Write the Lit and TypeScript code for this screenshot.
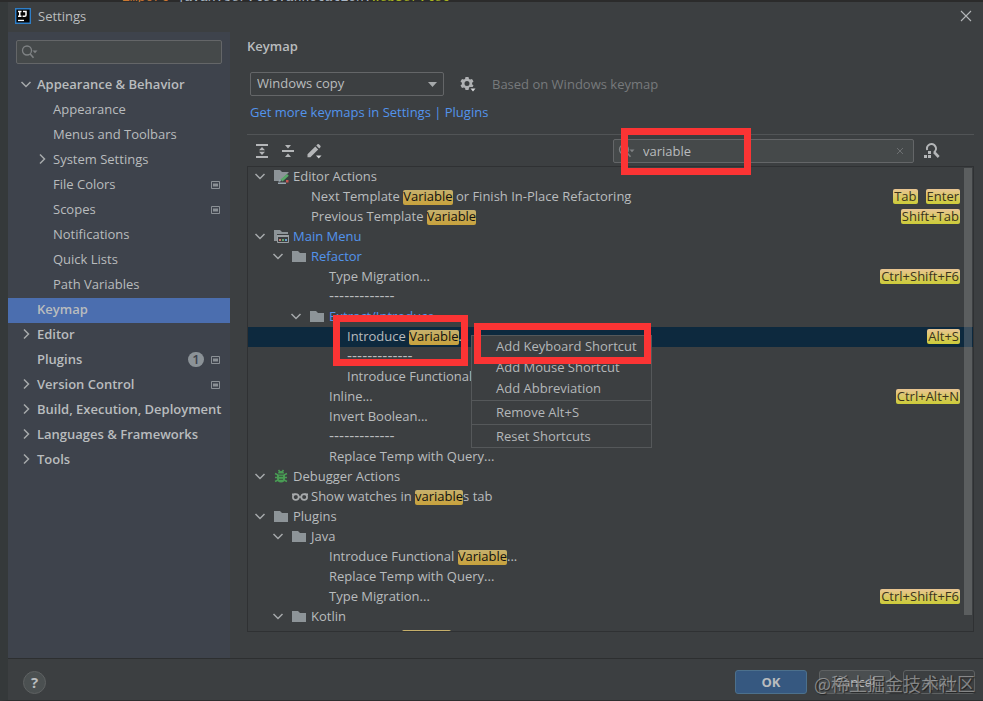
import { LitElement, html, css, svg, nothing, TemplateResult } from "lit";
import { customElement, property, state } from "lit/decorators.js";
import { classMap } from "lit/directives/class-map.js";
import { styleMap } from "lit/directives/style-map.js";

/* ---------- icons ---------- */

const icon = (body: unknown, size = 16) =>
  html`<svg width=${size} height=${size} viewBox="0 0 ${size} ${size}" aria-hidden="true">${body}</svg>`;

const chevronDown = () =>
  icon(svg`<path d="M1.500 4 L6 8.500 L10.500 4" fill="none" stroke="#a6a9ab" stroke-width="1.500"/>`, 12);
const chevronRight = () =>
  icon(svg`<path d="M4 1.500 L8.500 6 L4 10.500" fill="none" stroke="#a6a9ab" stroke-width="1.500"/>`, 12);

const folderShape = svg`<path d="M0 3h6l2 2h6v9H0z" fill="#8d9498"/>`;

const icons: Record<string, () => TemplateResult> = {
  folder: () => icon(folderShape),
  editor: () =>
    icon(svg`<path d="M0 2h6l2 2h7L6.500 13H0z" fill="#8d9498"/>
      <path d="M4.500 14l1-2.700 1.800 1.800z" fill="#9aa7b0"/>
      <path d="M6.500 11.500l6.500-5.500 1.800 1.800L8.500 13.500z" fill="#59a869"/>
      <path d="M4 14.500h8V16H4z" fill="#9aa7b0"/><path d="M12 12h2.500v2.500H12z" fill="#c75450"/>`),
  menu: () =>
    icon(svg`<path d="M0 2h6l2 2h6v2H3v7H0z" fill="#8d9498"/>
      <path d="M3.500 7.500h11v7h-11z" fill="#3c3f41" stroke="#9aa0a4"/>
      <path d="M3 7h12v2H3z" fill="#9aa0a4"/>
      <path d="M5 11h2v2H5z" fill="#c77a70"/><path d="M8 11h2v2H8z" fill="#62a870"/>
      <path d="M11 11h2v2h-2z" fill="#6a9fd0"/>`),
  bug: () =>
    icon(svg`<g fill="none" stroke="#499c54" stroke-width="1.600">
      <path d="M1 5.500l3 1.500M1 9.500h12M1 13.500l3-1.500M13 5.500l-3 1.500M13 13.500l-3-1.500M4.500 2l1.500 2M9.500 2L8 4"/></g>
      <path d="M4 5.500a3 2.500 0 0 1 6 0z" fill="#499c54"/>
      <path d="M3 6.500h8v4a4 4 0 0 1-8 0z" fill="#499c54"/>
      <path d="M5 8.300h4M5 11.300h4" stroke="#35583a" stroke-width="1"/>`),
  glasses: () =>
    icon(svg`<g fill="none" stroke="#a6a9ab" stroke-width="1.700">
      <circle cx="3.800" cy="9" r="2.900"/><circle cx="12.200" cy="9" r="2.900"/>
      <path d="M6.700 9h2.600M0 6.300h3.500M12.500 6.300H16"/></g>`),
};

const searchIcon = () =>
  icon(svg`<circle cx="6" cy="7.500" r="4.500" fill="none" stroke="#7f8284" stroke-width="1.300"/>
    <path d="M9 10.700l3.500 4" stroke="#7f8284" stroke-width="1.600"/>
    <path d="M11.500 7.500h5l-2.500 2.800z" fill="#7f8284"/>`, 18);

const projectIcon = () =>
  icon(svg`<path d="M.5 1.500h8v7h-8z" fill="none" stroke="#8b9095"/><path d="M2 3.500h5v3H2z" fill="#8b9095"/>`, 9);

const logo = () =>
  icon(svg`<path d="M.7.700h14.600v14.600H.7z" fill="#050505" stroke="#2f7fc8" stroke-width="1.400"/>
    <path d="M3 3.500h3.500M4.750 3.500v4.500M3 8.200h3.500M8 3.500h3V7q0 1.300-1.300 1.300H7.600" fill="none" stroke="#fff" stroke-width="1.500"/>
    <path d="M3 11.800h6v1.300H3z" fill="#fff"/>`);

const closeIcon = () =>
  icon(svg`<path d="M1 1l10 10M11 1L1 11" stroke="#b4b7b9" stroke-width="1.100"/>`, 12);
const clearIcon = () =>
  icon(svg`<path d="M1 1l6 6M7 1L1 7" stroke="#6c6f71" stroke-width="1"/>`, 8);

const gearIcon = () =>
  icon(svg`<path fill="#afb1b3" fill-rule="evenodd" d="M5.500 1h3l.5 1.900 1.100.6 1.900-.6 1.500 2.600-1.400 1.300v1.400l1.400 1.300-1.500 2.600-1.900-.6-1.100.6L8.500 14h-3L5 12.100l-1.100-.6-1.900.6L.5 9.500l1.400-1.300V6.800L.5 5.500 2 2.900l1.900.6L5 2.900zM7 5a2.500 2.500 0 1 0 0 5 2.500 2.500 0 0 0 0-5z"/>
    <path d="M9 11h7v5h-4z" fill="#3c3f41"/><path d="M10.500 12.500h5l-2.500 3z" fill="#d4d6d8"/>`);
const expandIcon = () =>
  icon(svg`<path fill="#b4b6b8" d="M2 1h12v2H2zM2 13h12v2H2zM8 4l3 3.300H5zM8 12l3-3.300H5z"/>`);
const collapseIcon = () =>
  icon(svg`<path fill="#b4b6b8" d="M2 7h12v2H2zM8 5.500L11 2H5zM8 10.500l3 3.500H5z"/>`);
const pencilIcon = () =>
  icon(svg`<path fill="#b4b6b8" d="M1.500 11.300l7.800-7.800 2.900 2.900-7.800 7.800H1.500zM10.300 2.500l1.200-1.200q.7-.6 1.400 0l1.500 1.500q.6.700 0 1.400l-1.200 1.200z"/>
    <path d="M10 12.500h5.500l-2.750 3z" fill="#d4d6d8"/>`);
const findShortcutIcon = () =>
  icon(svg`<path d="M3.200 7A4.500 4.500 0 1 1 10 9.300" fill="none" stroke="#b4b6b8" stroke-width="2"/>
    <path d="M10 9l4.700 5" stroke="#b4b6b8" stroke-width="2.600"/>
    <path fill="#b4b6b8" d="M0 12h3v3H0zM4 12h3v3H4zM4 8h3v3H4z"/>`);

/* ---------- data ---------- */

interface Category {
  label: string;
  child?: boolean;
  expander?: "open" | "closed";
  project?: boolean;
  badge?: number;
}

const categories: Category[] = [
  { label: "Appearance & Behavior", expander: "open" },
  { label: "Appearance", child: true },
  { label: "Menus and Toolbars", child: true },
  { label: "System Settings", child: true, expander: "closed" },
  { label: "File Colors", child: true, project: true },
  { label: "Scopes", child: true, project: true },
  { label: "Notifications", child: true },
  { label: "Quick Lists", child: true },
  { label: "Path Variables", child: true },
  { label: "Keymap" },
  { label: "Editor", expander: "closed" },
  { label: "Plugins", badge: 1, project: true },
  { label: "Version Control", expander: "closed", project: true },
  { label: "Build, Execution, Deployment", expander: "closed" },
  { label: "Languages & Frameworks", expander: "closed" },
  { label: "Tools", expander: "closed" },
];

interface Action {
  level: number;
  label?: string;
  icon?: string;
  open?: boolean;
  changed?: boolean;
  keys?: string[];
  selected?: boolean;
}

const actions: Action[] = [
  { level: 0, label: "Editor Actions", icon: "editor", open: true },
  { level: 1, label: "Next Template Variable or Finish In-Place Refactoring", keys: ["Tab", "Enter"] },
  { level: 1, label: "Previous Template Variable", keys: ["Shift+Tab"] },
  { level: 0, label: "Main Menu", icon: "menu", open: true, changed: true },
  { level: 1, label: "Refactor", icon: "folder", open: true, changed: true },
  { level: 2, label: "Type Migration...", keys: ["Ctrl+Shift+F6"] },
  { level: 2 },
  { level: 2, label: "Extract/Introduce", icon: "folder", open: true, changed: true },
  { level: 3, label: "Introduce Variable...", keys: ["Alt+S"], selected: true },
  { level: 3 },
  { level: 3, label: "Introduce Functional Variable..." },
  { level: 2, label: "Inline...", keys: ["Ctrl+Alt+N"] },
  { level: 2, label: "Invert Boolean..." },
  { level: 2 },
  { level: 2, label: "Replace Temp with Query..." },
  { level: 0, label: "Debugger Actions", icon: "bug", open: true },
  { level: 1, label: "Show watches in variables tab", icon: "glasses" },
  { level: 0, label: "Plugins", icon: "folder", open: true },
  { level: 1, label: "Java", icon: "folder", open: true },
  { level: 2, label: "Introduce Functional Variable..." },
  { level: 2, label: "Replace Temp with Query..." },
  { level: 2, label: "Type Migration...", keys: ["Ctrl+Shift+F6"] },
  { level: 1, label: "Kotlin", icon: "folder", open: true },
  { level: 2, label: "Introduce a Variable..." },
];

/* ---------- shared styles ---------- */

const base = css`
  * { box-sizing: border-box; }
  svg { display: block; flex: none; }
  button, input, select { font: inherit; color: inherit; margin: 0; padding: 0; border: 0; background: none; outline: 0; }
  ul { list-style: none; margin: 0; padding: 0; }
  .field {
    display: flex; align-items: center; height: 24px; padding: 0 8px 0 4px; gap: 7px;
    border: 1px solid #646668; border-radius: 2px; background: #45494a;
  }
  .field input { flex: 1; min-width: 0; height: 22px; }
  .callout { position: absolute; border: 7px solid #fb3434; pointer-events: none; }
`;

/* ---------- category list ---------- */

@customElement("settings-sidebar")
export class SettingsSidebar extends LitElement {
  @state() private current = "Keymap";

  static styles = [base, css`
    :host { display: flex; flex-direction: column; gap: 9px; padding-top: 8px; background: #3e434c; }
    .field { margin: 0 8px; background: #45494a; }
    .row {
      display: flex; align-items: center; width: 100%; height: 25px; padding: 0 10px 3px 12px;
      gap: 5px; text-align: left; font-weight: 600; white-space: nowrap;
    }
    .row.child { padding-left: 28px; font-weight: 400; }
    .row.current { background: #4b6eaf; }
    .slot { width: 12px; flex: none; }
    .label { flex: 1; }
    .badge {
      width: 16px; height: 15px; margin-right: 2px; border-radius: 8px; background: #8b9297; color: #3e434c;
      font-weight: 600; line-height: 15px; text-align: center; flex: none;
    }
  `];

  render() {
    return html`
      <label class="field">${searchIcon()}<input type="text" aria-label="Search settings" /></label>
      <ul>
        ${categories.map((c) => html`<li>
          <button
            class=${classMap({ row: true, child: !!c.child, current: c.label === this.current })}
            @click=${() => (this.current = c.label)}>
            <span class="slot">${c.expander === "open" ? chevronDown() : c.expander ? chevronRight() : nothing}</span>
            <span class="label">${c.label}</span>
            ${c.badge ? html`<span class="badge">${c.badge}</span>` : nothing}
            ${c.project ? projectIcon() : nothing}
          </button></li>`)}
      </ul>`;
  }
}

/* ---------- context menu ---------- */

@customElement("shortcut-menu")
export class ShortcutMenu extends LitElement {
  static styles = [base, css`
    :host { display: block; width: 181px; border: 1px solid #55585a; background: #3c3f41; color: #b4b7b9; }
    .group + .group { border-top: 1px solid #55585a; margin-top: 1px; padding-top: 1px; }
    .item { display: block; width: 100%; height: 21px; padding: 0 0 1px 24px; text-align: left; line-height: 20px; }
    .callout { left: 2px; right: 0; top: -13px; height: 41px; }
  `];

  render() {
    const groups = [["Add Keyboard Shortcut", "Add Mouse Shortcut", "Add Abbreviation"], ["Remove Alt+S"], ["Reset Shortcuts"]];
    return html`${groups.map((g) => html`<div class="group" role="group">
      ${g.map((t) => html`<button class="item" role="menuitem">${t}</button>`)}</div>`)}
      <div class="callout"></div>`;
  }
}

/* ---------- action tree ---------- */

@customElement("keymap-tree")
export class KeymapTree extends LitElement {
  @property() query = "";

  static styles = [base, css`
    :host { display: block; position: relative; overflow: hidden; border: 1px solid #2f3133; }
    .row { display: flex; align-items: center; height: 20px; padding: 0 13px 2px 0; white-space: nowrap; line-height: 18px; }
    .row.selected { position: relative; z-index: 1; background: #0d293e; }
    .row.changed .label { color: #5394ec; }
    .slot { width: 12px; margin-right: 8px; flex: none; }
    .pic { width: 16px; margin-right: 3px; flex: none; }
    .label { flex: 1; white-space: pre; }
    .rule { font: 14px/18px "DejaVu Sans", sans-serif; }
    mark {
      display: inline-block; height: 15px; line-height: 12px; border-radius: 2px; color: #111;
      background: linear-gradient(#c6b06c, #c8a23c);
    }
    .keys { display: flex; gap: 8px; align-self: flex-start; margin-top: 2px; }
    kbd {
      height: 15px; padding: 0 1px; border-radius: 2px; font: inherit; line-height: 14px; color: #3b341c;
      background: linear-gradient(#e9c593, #cccc38);
    }
    .bar { position: absolute; top: 1px; right: 1px; bottom: 16px; width: 8px; background: rgba(166, 166, 166, 0.3); z-index: 2; }
    shortcut-menu { position: absolute; left: 223px; top: 8px; }
    .callout { left: 85px; top: -12px; width: 135px; height: 51px; }
  `];

  private text(label: string) {
    const at = label.toLowerCase().indexOf(this.query.toLowerCase());
    if (!this.query || at < 0) return label;
    const end = at + this.query.length;
    return html`${label.slice(0, at)}<mark>${label.slice(at, end)}</mark>${label.slice(end)}`;
  }

  render() {
    return html`
      <ul role="tree" aria-label="Actions">
        ${actions.map((a) => html`<li role="treeitem"
          class=${classMap({ row: true, selected: !!a.selected, changed: !!a.changed })}
          style=${styleMap({ paddingLeft: `${6 + 18 * a.level}px` })}>
          <span class="slot">${a.open ? chevronDown() : nothing}</span>
          <span class="pic">${a.icon ? icons[a.icon]() : nothing}</span>
          ${a.label ? html`<span class="label">${this.text(a.label)}</span>` : html`<span class="label rule">-------------</span>`}
          ${a.keys ? html`<span class="keys">${a.keys.map((k) => html`<kbd>${k}</kbd>`)}</span>` : nothing}
          ${a.selected ? html`<div class="callout"></div><shortcut-menu role="menu"></shortcut-menu>` : nothing}
        </li>`)}
      </ul>
      <div class="bar"></div>`;
  }
}

/* ---------- page ---------- */

@customElement("app-root")
export class AppRoot extends LitElement {
  @state() private query = "variable";

  static styles = [base, css`
    :host {
      display: flex; flex-direction: column; height: 100vh; overflow: hidden; background: #3c3f41; color: #b9bcbe;
      font: 13px/20px "Open Sans", "Noto Sans CJK SC", sans-serif;
    }
    .code {
      display: flex; align-items: flex-end; height: 2px; flex: none; overflow: hidden; padding-left: 122px;
      background: #2b2b2b; color: #a9b7c6; font: 13px/8px "Liberation Mono", monospace; white-space: pre;
    }
    .kw { color: #cc7832; }
    .anno { color: #a9b520; }
    .window { flex: 1; min-height: 0; display: flex; flex-direction: column; border-left: 8px solid #35393a; border-bottom: 1px solid #2d2f30; }
    .title { display: flex; align-items: center; gap: 7px; height: 30px; padding: 0 11px 2px 7px; flex: none; }
    .title .name { flex: 1; }
    .content { flex: 1; min-height: 0; display: flex; }
    settings-sidebar { width: 222px; flex: none; }
    main { flex: 1; min-width: 0; display: flex; flex-direction: column; padding: 4px 9px 26px 17px; }
    h1 { margin: 0 0 16px; font-size: 13px; font-weight: 600; line-height: 20px; }
    .scheme { display: flex; align-items: center; padding-left: 3px; }
    .combo { position: relative; width: 194px; height: 24px; }
    .combo select {
      appearance: none; width: 100%; height: 24px; padding: 0 24px 2px 6px; line-height: 20px;
      border: 1px solid #646668; border-radius: 2px; background: #3c3f41;
    }
    .combo svg { position: absolute; right: 6px; top: 7px; pointer-events: none; }
    .gear { margin: 0 16px 0 16px; }
    .hint { color: #777a7c; }
    .more { align-self: flex-start; margin: 6px 3px 12px; color: #5394ec; text-decoration: none; }
    .tools { display: flex; align-items: center; height: 32px; flex: none; padding-left: 7px; gap: 10px; border-top: 1px solid #515456; }
    .space { flex: 1; }
    .filter { position: relative; width: 301px; flex: 0 1 auto; }
    .filter .field { padding-right: 9px; }
    .filter .callout { left: 8px; top: -11px; width: 130px; height: 47px; z-index: 3; }
    .find { margin-right: 34px; }
    keymap-tree { flex: 1; min-height: 0; }
    footer {
      position: relative; display: flex; align-items: center; gap: 12px; height: 42px; flex: none;
      padding: 5px 8px 0 15px; border-top: 1px solid #2d2f30;
    }
    .help { width: 23px; height: 23px; border-radius: 50%; border: 1px solid #5e6162; background: #4b5051; font-weight: 700; font-size: 15px; line-height: 20px; }
    .btn { width: 72px; height: 24px; border: 1px solid #5e6162; border-radius: 3px; background: #4a4e50; line-height: 20px; }
    .btn.ok { background: #365880; border-color: #4c708c; font-weight: 700; }
    .btn.off { background: none; color: #7c7f80; }
    .mark {
      position: absolute; right: 8px; top: 11px; font-size: 18px; line-height: 26px; white-space: nowrap;
      color: rgba(190, 190, 190, 0.6); text-shadow: 1px 1px 1px rgba(20, 20, 20, 0.7); pointer-events: none;
      font-family: "Noto Sans CJK SC", sans-serif;
    }
  `];

  render() {
    return html`
      <div class="code"><span class="kw">import </span><span>javax.servlet.annotation.</span><span class="anno">WebServlet</span></div>
      <div class="window">
        <header class="title">${logo()}<span class="name">Settings</span>
          <button aria-label="Close">${closeIcon()}</button></header>
        <div class="content">
          <settings-sidebar></settings-sidebar>
          <main>
            <h1>Keymap</h1>
            <div class="scheme">
              <div class="combo">
                <select aria-label="Keymap scheme"><option>Windows copy</option></select>
                ${icon(svg`<path d="M1 3h9L5.500 8z" fill="#a6a9ab"/>`, 11)}
              </div>
              <button class="gear" aria-label="Scheme actions">${gearIcon()}</button>
              <span class="hint">Based on Windows keymap</span>
            </div>
            <a class="more" href="#plugins">Get more keymaps in Settings | Plugins</a>
            <div class="tools">
              <button aria-label="Expand all">${expandIcon()}</button>
              <button aria-label="Collapse all">${collapseIcon()}</button>
              <button aria-label="Edit shortcut">${pencilIcon()}</button>
              <span class="space"></span>
              <div class="filter">
                <label class="field">${searchIcon()}<input type="text" aria-label="Search actions" .value=${this.query}
                  @input=${(e: Event) => (this.query = (e.target as HTMLInputElement).value)} />
                  <button aria-label="Clear" @click=${() => (this.query = "")}>${clearIcon()}</button></label>
                <div class="callout"></div>
              </div>
              <button class="find" aria-label="Find by shortcut">${findShortcutIcon()}</button>
            </div>
            <keymap-tree .query=${this.query}></keymap-tree>
          </main>
        </div>
        <footer>
          <button class="help" aria-label="Help">?</button>
          <span class="space"></span>
          <button class="btn ok">OK</button>
          <button class="btn">Cancel</button>
          <button class="btn off" disabled>Apply</button>
          <span class="mark">@稀土掘金技术社区</span>
        </footer>
      </div>`;
  }
}
